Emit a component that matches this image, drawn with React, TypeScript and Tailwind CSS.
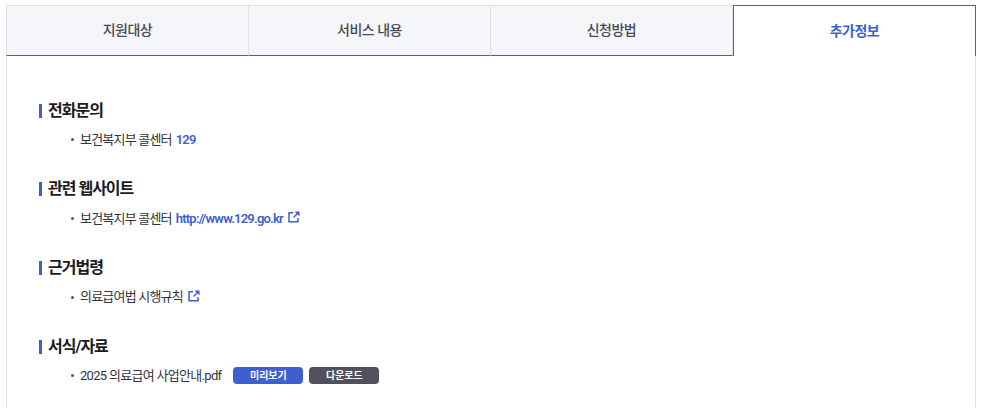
const font = { fontFamily: '"Roboto", "Noto Sans CJK KR", sans-serif' };

const tabs = ['지원대상', '서비스 내용', '신청방법', '추가정보'];

const ExternalIcon = () => (
  <svg width="12" height="12" viewBox="0 0 12 12" fill="none" className="ml-[5px] mb-[3px] shrink-0">
    <path d="M5 1.75H1V10.75H10V7" stroke="#3f5fd1" strokeWidth="1.5" />
    <path d="M6.5 0.5H11.5V5.5Z" fill="#3f5fd1" />
    <path d="M9.5 2.5L5.5 6.5" stroke="#3f5fd1" strokeWidth="1.5" />
  </svg>
);

const Section: React.FC<{ title: string; children: React.ReactNode }> = ({ title, children }) => (
  <div className="mb-[29.67px]">
    <h3 className="flex items-center h-[20px] text-[16px] font-bold text-[#1b1b1f] tracking-[-1px]">
      <span className="w-[3px] h-[14px] bg-[#3f5fd1] mr-[6px]" />
      {title}
    </h3>
    <div className="flex items-center h-[20px] mt-[9px] pl-[32px] text-[13px] text-[#333338] tracking-[-0.8px]">
      <span className="w-[3px] h-[3px] rounded-full bg-[#555] mr-[6px]" />
      {children}
    </div>
  </div>
);

export default function App() {
  return (
    <div className="w-[984px] h-[408px] overflow-hidden bg-white pt-[5px] pl-[6px]" style={font}>
      <div className="flex w-[970px] h-[51px]">
        {tabs.map((tab, i) =>
          i === 3 ? (
            <div key={tab} className="w-[243px] flex items-center justify-center bg-white border border-b-0 border-[#3f5fd1] text-[14px] font-bold text-[#3f5fd1] tracking-[-0.5px]">
              {tab}
            </div>
          ) : (
            <div key={tab} className="w-[242px] first:w-[243px] flex items-center justify-center bg-[#f5f6fa] border-t border-t-[#dfe0e4] border-r border-r-[#dfe0e4] first:border-l first:border-l-[#dfe0e4] border-b border-b-[#3f5fd1] text-[14px] font-medium text-[#4a4a50] tracking-[-0.5px]">
              {tab}
            </div>
          ),
        )}
      </div>
      <div className="w-[970px] h-[352px] border-x border-[#dfe0e4] pt-[44.8px] pl-[32px]">
        <Section title="전화문의">
          보건복지부 콜센터
          <span className="ml-[4px] font-semibold text-[#3f5fd1]">129</span>
        </Section>
        <Section title="관련 웹사이트">
          보건복지부 콜센터
          <span className="ml-[4px] font-semibold text-[#3f5fd1] tracking-[-0.78px]">http://www.129.go.kr</span>
          <ExternalIcon />
        </Section>
        <Section title="근거법령">
          의료급여법 시행규칙
          <ExternalIcon />
        </Section>
        <Section title="서식/자료">
          <span className="tracking-[-0.7px]">2025 의료급여 사업안내.pdf</span>
          <span className="ml-[12px] w-[70px] h-[17px] rounded-[4px] bg-[#3f5fd1] text-white text-[10px] font-semibold tracking-normal flex items-center justify-center">미리보기</span>
          <span className="ml-[6px] w-[70px] h-[17px] rounded-[4px] bg-[#52505c] text-white text-[10px] font-semibold tracking-normal flex items-center justify-center">다운로드</span>
        </Section>
      </div>
    </div>
  );
}
